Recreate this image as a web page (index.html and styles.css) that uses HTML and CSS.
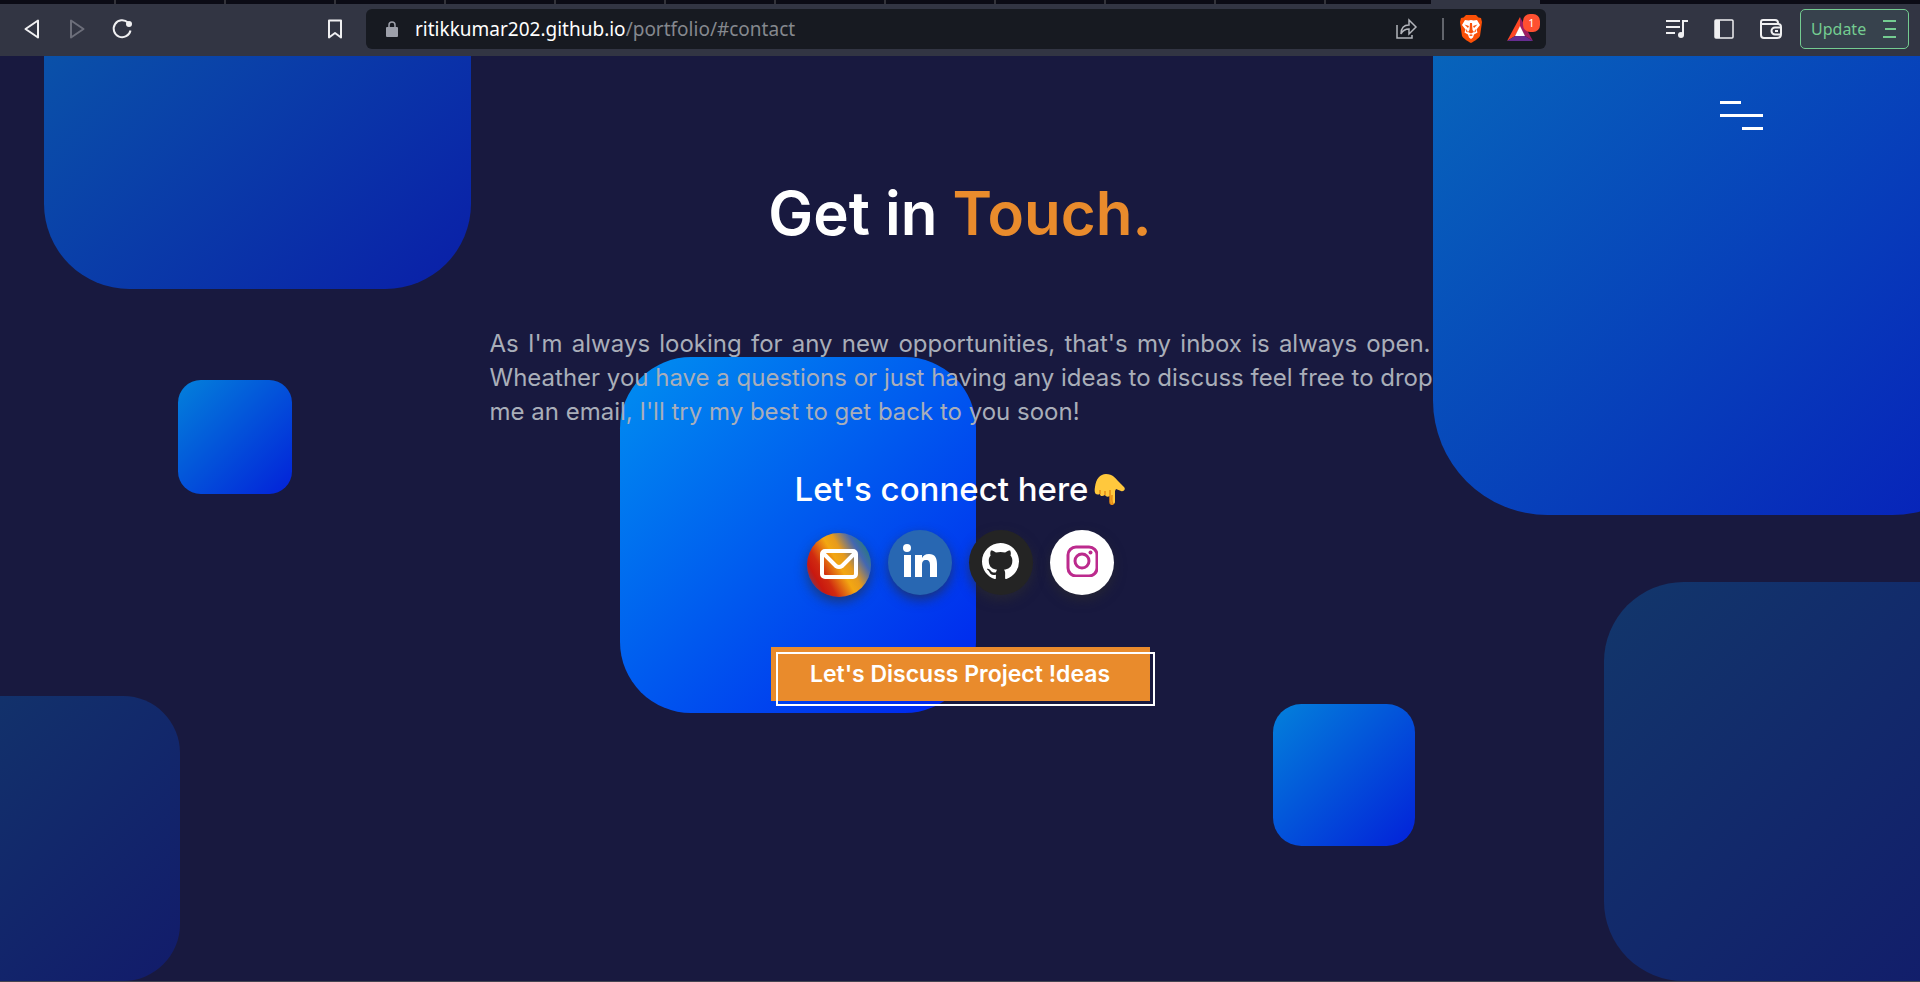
FILE: index.html
```html
<!DOCTYPE html>
<html lang="en">
<head>
<meta charset="utf-8">
<title>Portfolio - Contact</title>
<link rel="stylesheet" href="styles.css">
</head>
<body>
<header class="browser">
  <div class="tabs"><i></i><i></i><i></i><i></i><i></i><i></i><i></i><i></i><i></i><i></i><i></i><i></i><b class="tab-active"></b></div>
  <div class="toolbar">
    <div class="nav">
      <button class="tool" aria-label="Back"><svg width="24" height="24" viewBox="0 0 24 24" fill="none" stroke="#f0f0f2" stroke-width="2" stroke-linejoin="round"><path d="M18 3.500v17L5.500 12z"/></svg></button>
      <button class="tool" aria-label="Forward"><svg width="24" height="24" viewBox="0 0 24 24" fill="none" stroke="#6c6e7a" stroke-width="2" stroke-linejoin="round"><path d="M6 3.500v17L18.500 12z"/></svg></button>
      <button class="tool" aria-label="Reload"><svg width="24" height="24" viewBox="0 0 24 24" fill="none" stroke="#f0f0f2" stroke-width="2"><path d="M18 5.500a8.500 8.500 0 1 0 2.500 8"/><circle cx="19" cy="7" r="3" fill="#f0f0f2" stroke="none"/></svg></button>
    </div>
    <button class="tool bookmark" aria-label="Bookmark"><svg width="24" height="24" viewBox="0 0 24 24" fill="none" stroke="#f0f0f2" stroke-width="2" stroke-linejoin="round"><path d="M6 3.500h12v17l-6-4.500-6 4.500z"/></svg></button>
    <div class="address">
      <svg class="lock" width="14" height="18" viewBox="0 0 14 18"><rect x="1" y="7" width="12" height="10" rx="1" fill="#9da0aa"/><path d="M4 7V5a3 3 0 0 1 6 0v2" fill="none" stroke="#9da0aa" stroke-width="1.500"/></svg>
      <a class="url" href="#contact">ritikkumar202.github.io<span class="path">/portfolio/#contact</span></a>
      <button class="tool share" aria-label="Share"><svg width="24" height="24" viewBox="0 0 24 24" fill="none" stroke="#b3b5bb" stroke-width="1.500"><path d="M3 8v13h15v-3"/><path d="M7 17c0-6 3-9 8-9V3l7 7-7 7v-5c-4 0-6 1-8 5z"/></svg></button>
      <i class="divider"></i>
      <button class="tool brave" aria-label="Brave Shields"><svg width="24" height="28" viewBox="0 0 24 28"><path d="M7 0h10l2.500 2.500L22 3l1 4-2 14c-1 2-5 5-9 7-4-2-8-5-9-7L1 7l1-4 2.500-.5z" fill="#fb5007"/><path d="m6 5 3.500.5L12 5l2.500.5L18 5l3 5-3.500 4.500 1 3-3.500 2-1 3-2 1.500-2-1.500-1-3-3.500-2 1-3L3 10z" fill="#fff"/><path d="m5.500 9.500 4.500 1.500-1 2zM18.500 9.500 14 11l1 2zM11 8h2l.5 7 1.500 2-3 1.500L9 17l1.500-2zM7.500 14l1.500 3.500-2-1zM16.500 14 15 17.500l2-1zM10 20l2-.8 2 .8-2 1.200z" fill="#fb5007"/></svg></button>
      <button class="tool rewards" aria-label="Brave Rewards, 1 notification"><svg width="26" height="24" viewBox="0 0 26 24"><path d="M13 0 0 24l8-5 5-9z" fill="#ff4724"/><path d="m13 0 13 24-8-5-5-9z" fill="#9e1f63"/><path d="m0 24 8-5h10l8 5z" fill="#662d91"/><path d="m13 9 5 10H8z" fill="#fff"/></svg><span class="badge">1</span></button>
    </div>
    <div class="actions">
      <button class="tool" aria-label="Media"><svg width="24" height="24" viewBox="0 0 24 24" fill="none" stroke="#f0f0f2" stroke-width="2"><path d="M1 4h14M1 10h14M1 16h9M18 18V4h5"/><circle cx="16" cy="18" r="3" fill="#f0f0f2" stroke="none"/></svg></button>
      <button class="tool" aria-label="Sidebar"><svg width="24" height="24" viewBox="0 0 24 24"><rect x="3" y="3" width="18" height="18" rx="1" fill="none" stroke="#f0f0f2" stroke-width="1.500"/><path d="M3 3h5v18H3z" fill="#f0f0f2"/></svg></button>
      <button class="tool" aria-label="Wallet"><svg width="24" height="24" viewBox="0 0 24 24" fill="none" stroke="#f0f0f2" stroke-width="2"><path d="M19 7V6q0-3-3-3H4Q2 3 2 5v13q0 3 3 3h13q4 0 4-4v-7q0-3-3-3H2"/><path d="M22 10.500h-6a3.500 3.500 0 0 0 0 7h6"/><path d="M16 14h3"/></svg></button>
      <button class="update">Update <svg width="13" height="20" viewBox="0 0 13 20" stroke="#74cc91" stroke-width="2"><path d="M0 2h13M2 10h11M0 18h13"/></svg></button>
    </div>
  </div>
</header>
<main class="page" id="contact">
  <div class="shapes" aria-hidden="true">
    <i class="sq sq-a"></i><i class="sq sq-b"></i><i class="sq sq-c"></i><i class="sq sq-d"></i><i class="sq sq-e"></i><i class="sq sq-f"></i><i class="sq sq-g"></i>
  </div>
  <button class="menu" aria-label="Menu"><i></i><i></i><i></i></button>
  <section class="contact">
    <h1>Get in <span>Touch.</span></h1>
    <p class="intro"><span>As I'm always looking for any new opportunities, that's my inbox is always open.</span> <span>Wheather you have a questions or just having any ideas to discuss feel free to drop</span> <span class="last">me an email, I'll try my best to get back to you soon!</span></p>
    <h2>Let's connect here<svg width="32" height="32" viewBox="0 0 32 32"><path d="M1 14C2 6 6 1 12 1c7 0 9 4 13 8l5 5c2 2 0 5-3 4l-5-2-1 2v11c0 3-5 3-5 0v-6c-2 1-4 1-5-1-3 2-5 1-5-1-5 2-6-2-5-7z" fill="#ffc83d"/><path d="M6 17v4m5-3v4m5-5v4m0 0v8c0 2 2 3 3 2-2-2-1-5-1-9" fill="none" stroke="#e68a13" stroke-width="1.500"/></svg></h2>
    <nav class="social">
      <a class="mail" href="mailto:" aria-label="Email"><svg width="38" height="30" viewBox="0 0 38 30" fill="none" stroke="#fff" stroke-width="4" stroke-linejoin="round"><rect x="2" y="2" width="34" height="26" rx="3"/><path d="m3 4 13 13q3 2 6 0L35 4"/></svg></a>
      <a class="linkedin" href="#linkedin" aria-label="LinkedIn"><svg width="34" height="34" viewBox="0 0 34 34" fill="#fff"><circle cx="4" cy="4" r="4"/><rect x="1" y="11" width="7" height="22"/><path d="M12 11h7v3c1-2 3-4 7-4 6 0 8 4 8 10v13h-7V21c0-3-1-5-4-5s-4 2-4 5v12h-7z"/></svg></a>
      <a class="github" href="#github" aria-label="GitHub"><svg width="37" height="37" viewBox="0 0 16 16" fill="#fff"><path d="M8 0C3.580 0 0 3.580 0 8c0 3.540 2.290 6.530 5.470 7.590.4.070.55-.17.55-.38 0-.19-.01-.82-.01-1.490-2.010.37-2.530-.49-2.690-.94-.09-.23-.48-.94-.82-1.130-.28-.15-.68-.52-.01-.53.63-.01 1.080.58 1.230.82.72 1.210 1.870.87 2.330.66.07-.52.28-.87.51-1.070-1.780-.2-3.640-.89-3.640-3.950 0-.87.31-1.590.82-2.150-.08-.2-.36-1.020.08-2.120 0 0 .67-.21 2.200.82.64-.18 1.320-.27 2-.27s1.360.09 2 .27c1.530-1.040 2.200-.82 2.200-.82.44 1.100.16 1.920.08 2.120.51.56.82 1.270.82 2.150 0 3.070-1.870 3.750-3.650 3.950.29.25.54.73.54 1.480 0 1.070-.01 1.930-.01 2.200 0 .21.15.46.55.38A8.010 8.010 0 0 0 16 8c0-4.420-3.580-8-8-8z"/></svg></a>
      <a class="instagram" href="#instagram" aria-label="Instagram"><svg width="32" height="32" viewBox="0 0 32 32" fill="none" stroke="#bc2a8d" stroke-width="3"><rect x="2" y="2" width="29" height="29" rx="8"/><circle cx="16" cy="16" r="7"/><circle cx="24.500" cy="7.500" r="2" fill="#bc2a8d" stroke="none"/></svg></a>
    </nav>
    <a class="cta" href="#discuss">Let's Discuss Project !deas</a>
  </section>
</main>
</body>
</html>
```
FILE: styles.css
```css
*, *::before, *::after { box-sizing: border-box; }
body { margin: 0; min-height: 100vh; display: flex; flex-direction: column; background: #18193f; font-family: Inter, "Open Sans", sans-serif; }
button { border: 0; padding: 0; background: none; font: inherit; color: inherit; cursor: pointer; }
a { color: inherit; text-decoration: none; }
svg { display: block; flex: none; }

.browser { background: #323543; font-family: "Noto Sans", "Open Sans", sans-serif; }
.tabs { height: 4px; background: #0b0b15; display: flex; padding-left: 6px; position: relative; }
.tabs i { width: 110px; border-right: 2px solid #33333a; }
.tab-active { position: absolute; left: 1431px; width: 109px; height: 4px; background: #323543; }
.toolbar { height: 52px; padding: 5px 11px 7px 20px; display: flex; align-items: center; }
.tool { display: grid; place-items: center; position: relative; }
.nav { display: flex; gap: 21px; }
.bookmark { margin-left: 189px; }
.address { flex: 1; height: 40px; margin: 0 119px 0 19px; padding: 0 7px 0 19px; border-radius: 6px; background: #171a21; display: flex; align-items: center; }
.url { margin: 0 auto 0 16px; color: #fff; font-size: 19px; line-height: 24px; }
.path { color: #85888e; }
.divider { width: 2px; height: 22px; margin: 0 15px 0 24px; background: #62656c; }
.rewards { margin-left: 24px; padding-right: 6px; }
.badge { position: absolute; left: 16px; top: -3px; width: 17px; height: 18px; border-radius: 7px; background: #ff5031; color: #fff; font-size: 11px; line-height: 18px; text-align: center; }
.actions { display: flex; align-items: center; gap: 23px; }
.update { width: 109px; height: 40px; margin-left: -6px; padding: 0 12px 0 10px; border: 1px solid #74cc91; border-radius: 5px; background: #37424d; color: #74cc91; font-size: 16px; display: flex; align-items: center; justify-content: space-between; }

.page { flex: 1; position: relative; overflow: hidden; border-bottom: 1px solid #454552; }
.shapes { position: absolute; inset: 0; }
.sq { position: absolute; border-radius: 20%; aspect-ratio: 1; background: linear-gradient(135deg, #008ff0, #0022ee); }
.sq-a { left: 44px; top: -194px; width: 427px; opacity: .6; }
.sq-b { left: 178px; top: 324px; width: 114px; opacity: .88; }
.sq-c { left: 620px; top: 301px; width: 356px; }
.sq-d { left: 1433px; top: -115px; width: 574px; opacity: .7; }
.sq-e { left: -105px; top: 640px; width: 285px; opacity: .25; }
.sq-f { left: 1604px; top: 526px; width: 399px; opacity: .25; }
.sq-g { left: 1273px; top: 648px; width: 142px; opacity: .88; }
.menu { position: absolute; top: 45px; right: 157px; width: 43px; display: grid; gap: 10px; }
.menu i { height: 3px; width: 21px; background: #fff; }
.menu i:nth-child(2) { width: 43px; }
.menu i:nth-child(3) { justify-self: end; }

.contact { position: relative; width: 49%; min-width: 941px; margin: 0 auto; padding-top: 122px; display: flex; flex-direction: column; align-items: center; }
h1 { margin: 0; font-size: 60px; line-height: 70px; font-weight: 600; color: #fff; }
h1 span { color: #e98b2c; }
.intro { align-self: stretch; margin: 79px 0 0; color: #a9aeb9; font-size: 24px; line-height: 34px; }
.intro span { display: block; white-space: nowrap; text-align-last: justify; }
.intro .last { text-align-last: left; }
h2 { margin: 38px 0 0; display: flex; align-items: center; gap: 5px; color: #fff; font-size: 33px; line-height: 44px; font-weight: 500; }
.social { margin-top: 19px; display: flex; gap: 17px; }
.social a { width: 64px; height: 65px; border-radius: 50%; display: grid; place-items: center; box-shadow: 0 5px 12px #2d2d2d99; }
.social svg { margin-bottom: 3px; }
.social .mail { height: 64px; margin-top: 3px; background: linear-gradient(60deg, #3b5998, #c9180f 20%, #d02a10 30%, #f3a712 50%, #e79b1c 60%, #4267b2 77%, #128a4c); }
.linkedin { background: #2867b2; }
.github { background: #242424; }
.instagram { background: #fff; }
.cta { position: relative; margin-top: 50px; width: 379px; height: 54px; background: #e98b2c; color: #fff; font-size: 23px; line-height: 54px; font-weight: 600; text-align: center; }
.cta::after { content: ""; position: absolute; left: 5px; top: 5px; width: 100%; height: 100%; border: 2px solid #fff; }
```
